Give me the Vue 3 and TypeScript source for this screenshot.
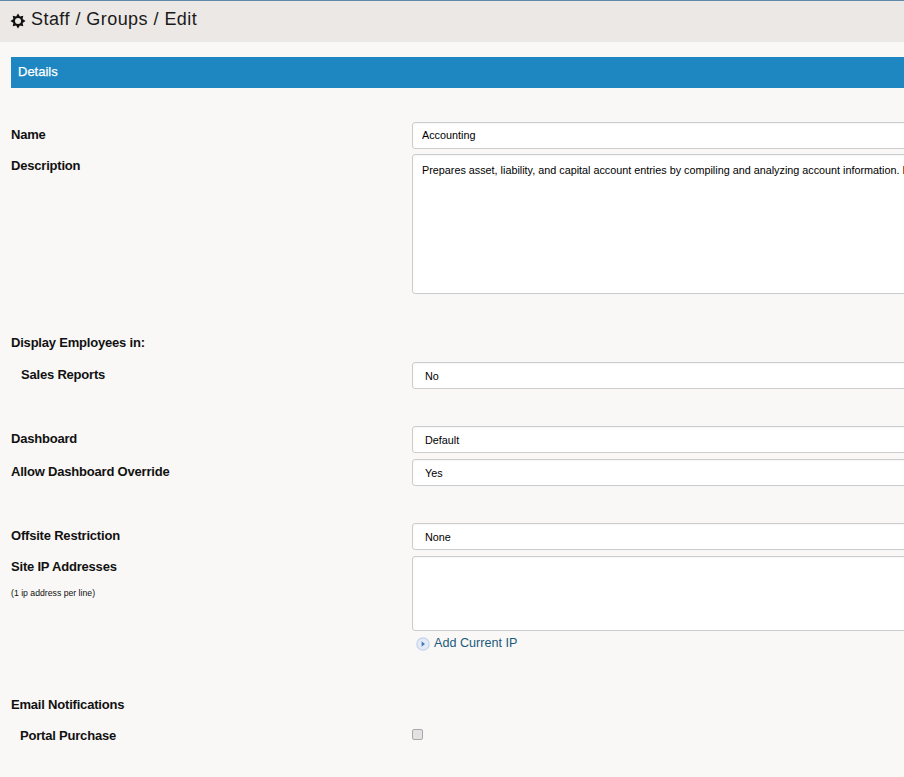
<script setup lang="ts">
import { ref } from 'vue'

const name = ref('Accounting')
const description = ref(
  'Prepares asset, liability, and capital account entries by compiling and analyzing account information. Documents financial transactions by entering account information.'
)
const salesReports = ref('No')
const dashboard = ref('Default')
const dashboardOverride = ref('Yes')
const offsite = ref('None')
const siteIps = ref('')
const portalPurchase = ref(false)
</script>

<template>
  <div class="page">
    <header class="page-head">
      <svg class="gear" viewBox="0 0 16 16" width="16" height="16" aria-hidden="true">
        <path
          d="M8 .5 9.900 3.400 13.300 2.700 12.600 6.100 15.500 8 12.600 9.900 13.300 13.300 9.900 12.600 8 15.500 6.100 12.600 2.700 13.300 3.400 9.900.5 8 3.400 6.100 2.700 2.700 6.100 3.400z"
          fill="#111"
        />
        <circle cx="8" cy="8" r="3" fill="#ece8e5" />
      </svg>
      <h1>Staff / Groups / Edit</h1>
    </header>

    <section class="content">
      <div class="section-bar">Details</div>

      <form class="form" @submit.prevent>
        <div class="row row-name">
          <label>Name</label>
          <input v-model="name" class="field text-field" type="text" />
        </div>
        <div class="row row-desc">
          <label>Description</label>
          <textarea v-model="description" class="field area desc-area" wrap="off"></textarea>
        </div>

        <div class="heading display-heading">Display Employees in:</div>
        <div class="row row-sales">
          <label class="sub">Sales Reports</label>
          <select v-model="salesReports" class="field select">
            <option>No</option>
            <option>Yes</option>
          </select>
        </div>

        <div class="row row-dash">
          <label>Dashboard</label>
          <select v-model="dashboard" class="field select">
            <option>Default</option>
          </select>
        </div>
        <div class="row row-override">
          <label>Allow Dashboard Override</label>
          <select v-model="dashboardOverride" class="field select">
            <option>Yes</option>
            <option>No</option>
          </select>
        </div>

        <div class="row row-offsite">
          <label>Offsite Restriction</label>
          <select v-model="offsite" class="field select">
            <option>None</option>
          </select>
        </div>
        <div class="row row-ip">
          <div class="label-stack">
            <label>Site IP Addresses</label>
            <small>(1 ip address per line)</small>
          </div>
          <div>
            <textarea v-model="siteIps" class="field area ip-area"></textarea>
            <a class="add-ip" href="#" @click.prevent>
              <svg viewBox="0 0 14 14" width="14" height="14" aria-hidden="true">
                <circle cx="7" cy="7" r="6.2" fill="#e3ebf7" stroke="#c3d3ec" stroke-width="1.2" />
                <path d="M5.600 4.300 9 7l-3.400 2.700z" fill="#4a78b5" />
              </svg>
              <span>Add Current IP</span>
            </a>
          </div>
        </div>

        <div class="heading email-heading">Email Notifications</div>
        <div class="row row-portal">
          <label class="sub sub-portal">Portal Purchase</label>
          <input v-model="portalPurchase" class="check" type="checkbox" />
        </div>
      </form>
    </section>
  </div>
</template>

<style>
html,
body {
  margin: 0;
  overflow: hidden;
  background: #f9f8f6;
}
</style>

<style scoped>
.page {
  width: 904px;
  height: 777px;
  overflow: hidden;
  background: #f9f8f6;
  font-family: 'Liberation Sans', Arial, sans-serif;
  color: #000;
}

.page-head {
  display: flex;
  align-items: center;
  gap: 4px;
  box-sizing: border-box;
  height: 42px;
  padding: 0 0 4px 10px;
  background: #ece8e5;
  border-top: 1px solid #5d8aa6;
}

.gear {
  flex: none;
  margin-top: 2px;
}

.page-head h1 {
  margin: 0 0 0 1px;
  font-size: 18px;
  font-weight: 400;
  letter-spacing: 0.45px;
  color: #1a1a1a;
}

.content {
  padding: 15px 0 0 11px;
}

.section-bar {
  box-sizing: border-box;
  height: 31px;
  width: 893px;
  padding: 7px 0 0 7px;
  background: #1e87c1;
  color: #fff;
  font-size: 13px;
  font-weight: 400;
  -webkit-text-stroke: 0.25px #fff;
}

.form {
  width: 1400px;
}

.row {
  display: grid;
  grid-template-columns: 401px 700px;
  align-items: start;
}

.row label,
.heading {
  font-size: 13px;
  font-weight: 700;
  line-height: 15px;
  letter-spacing: -0.2px;
  color: #111;
}

.row > label {
  padding-top: 5px;
}

.row-name {
  margin-top: 34px;
}
.row-desc {
  margin-top: 5px;
}
.row-desc > label {
  padding-top: 4px;
}
.display-heading {
  margin-top: 41px;
}
.row-sales {
  margin-top: 12px;
}
.row-dash {
  margin-top: 37px;
}
.row-override {
  margin-top: 6px;
}
.row-offsite {
  margin-top: 37px;
}
.row-ip {
  margin-top: 6px;
}
.email-heading {
  margin-top: 46px;
}
.row-portal {
  margin-top: 11px;
}

.sub {
  padding-left: 10px;
}
.sub-portal {
  padding-left: 9px;
}

.field {
  display: block;
  box-sizing: border-box;
  width: 700px;
  margin: 0;
  background: #fff;
  border: 1px solid #ccc;
  border-radius: 3px;
  box-shadow: inset 0 1px 2px rgba(0, 0, 0, 0.04);
  font-family: 'Liberation Sans', Arial, sans-serif;
  font-size: 10.800px;
  color: #000;
  outline: none;
}

.text-field {
  height: 27px;
  padding: 0 9px 2px;
}

.area {
  padding: 8px 9px;
  resize: none;
  line-height: 14px;
  overflow: hidden;
}

.desc-area {
  height: 140px;
}

.ip-area {
  height: 75px;
}

.select {
  height: 27px;
  padding: 1px 12px 0;
  appearance: none;
}

.label-stack {
  display: flex;
  flex-direction: column;
  padding-top: 3px;
}

.label-stack small {
  margin-top: 15px;
  font-size: 8.700px;
  line-height: 9px;
  color: #111;
}

.add-ip {
  display: flex;
  align-items: center;
  gap: 4px;
  margin: 4px 0 0 4px;
  font-size: 12.600px;
  line-height: 16px;
  color: #1c5a7d;
  text-decoration: none;
}

.add-ip svg {
  flex: none;
  margin-top: 2px;
}

.check {
  appearance: none;
  box-sizing: border-box;
  width: 11px;
  height: 11px;
  margin: 6px 0 0;
  background: #e2e2e2;
  border: 1px solid #a9a9a9;
  border-radius: 2px;
}
</style>
